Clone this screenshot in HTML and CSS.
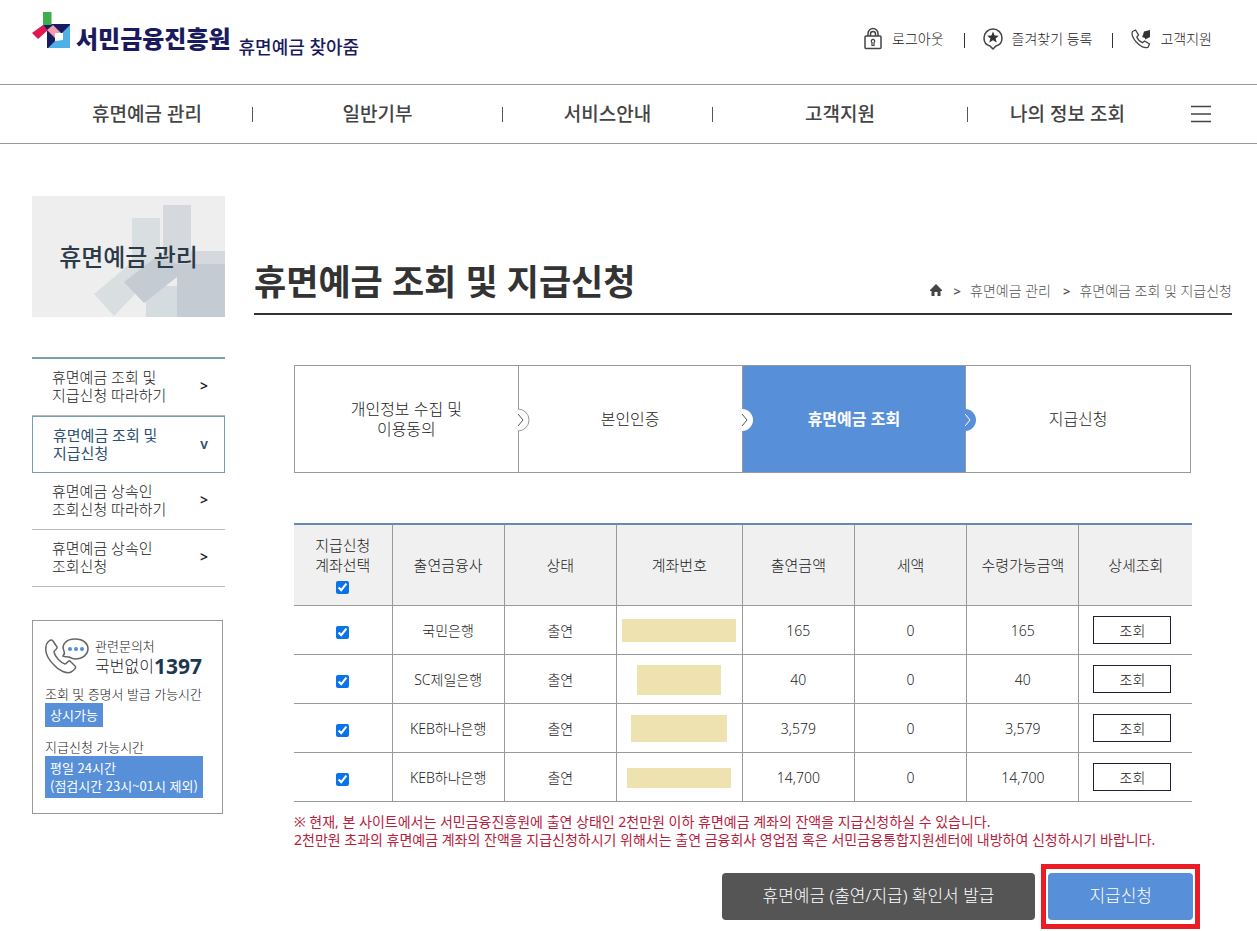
FILE: index.html
```html
<!DOCTYPE html>
<html lang="ko">
<head>
<meta charset="utf-8">
<meta name="viewport" content="width=device-width, initial-scale=1">
<title>휴면예금 조회 및 지급신청 - 휴면예금 찾아줌</title>
<link rel="stylesheet" href="styles.css">
</head>
<body>
<header class="header">
  <a class="logo" href="#">
    <svg class="logo-mark" viewBox="0 0 39 38" width="39" height="38" aria-hidden="true">
      <path fill="#1a1a5e" d="M15 13h23v24H15z"/>
      <path fill="#4db1e5" d="M38 14v23H16l9-9 5-6z"/>
      <path fill="#3bb04a" d="M11 1h8.500v13H11z"/>
      <path fill="#e0184f" d="M0 22 11 14l5 5L6 28z"/>
      <path fill="#1a1a5e" d="M11 14h12l-7 6z"/>
      <path fill="#f19db1" d="m15 19 6-5 8 8-6 5z"/>
      <path fill="#fff" d="M23 22h8v7l-8 1z"/>
    </svg>
    <span class="logo-name">서민금융진흥원</span>
    <span class="logo-service">휴면예금 찾아줌</span>
  </a>
  <ul class="util">
    <li><a href="#">
      <svg viewBox="0 0 20 24" width="20" height="24" fill="none" stroke="#444" stroke-width="1.500" aria-hidden="true"><rect x="2" y="9" width="16" height="12.500" rx="1"/><path d="M5 9V6.500a5 5 0 0 1 10 0V9M7.500 9V7a2.500 2.500 0 0 1 5 0v2"/><path stroke-width="1.200" d="M9 15.500a1.700 1.700 0 1 1 2 0v3H9z"/></svg>
      로그아웃</a></li>
    <li><a href="#">
      <svg viewBox="0 0 20 24" width="20" height="24" fill="none" stroke="#444" stroke-width="1.500" aria-hidden="true"><path d="M10 22 7 19C3 18 1 14.500 1 11a9 9 0 0 1 18 0c0 3.500-2 7-6 8z"/><path fill="#333" stroke="none" d="m10 4.500 1.600 3.900 4.200.3-3.200 2.700 1.100 4.100-3.700-2.200-3.700 2.200 1.100-4.100-3.200-2.700 4.200-.3z"/></svg>
      즐겨찾기 등록</a></li>
    <li><a href="#">
      <svg viewBox="0 0 20 24" width="20" height="24" fill="none" stroke="#444" stroke-width="1.300" aria-hidden="true"><path d="m1.500 4.500 3-1.500 3 5-1.700 2c1 2.500 3.200 4.800 5.700 5.700l2-1.700 5 3-1.500 3.200c-1.500.8-4 .4-6.500-.9C6 16.500 2.800 12.500 1.500 9c-.6-1.800-.6-3.300 0-4.500z"/><path fill="#333" stroke="none" d="M13 4.500 19 3v7l-2 1-3 1.500V11l-3-1 1-2z"/></svg>
      고객지원</a></li>
  </ul>
</header>
<nav class="gnb" aria-label="주 메뉴">
  <ul class="gnb-list">
    <li class="gnb-a"><a href="#">휴면예금 관리</a></li>
    <li class="gnb-b"><a href="#">일반기부</a></li>
    <li class="gnb-c"><a href="#">서비스안내</a></li>
    <li class="gnb-d"><a href="#">고객지원</a></li>
    <li class="gnb-e"><a href="#">나의 정보 조회</a></li>
  </ul>
  <button class="burger" type="button" aria-label="전체 메뉴"><svg viewBox="0 0 20 18" width="20" height="18" aria-hidden="true"><path stroke="#444" stroke-width="1.500" d="M0 1.500h20M0 9h20M0 16.500h20"/></svg></button>
</nav>
<div class="layout">
  <aside class="side">
    <div class="side-title">
      <svg class="side-art" viewBox="0 0 193 121" preserveAspectRatio="none" aria-hidden="true">
        <path fill="#d9dfe1" d="M100 22h28v50l-46 48-20-22 38-32z"/>
        <path fill="#d5d9dd" d="M131 9h28v46h34v14h-62z"/>
        <path fill="#d5dcdf" d="M114 90h31v31h-31z"/>
        <path fill="#c5cbd3" d="m92 86 32-25 22 7h47v53h-48V81l-33 26z"/>
      </svg>
      <h2>휴면예금 관리</h2>
    </div>
    <ul class="lnb">
      <li><a href="#"><span>휴면예금 조회 및<br>지급신청 따라하기</span><b>&gt;</b></a></li>
      <li class="on"><a href="#"><span>휴면예금 조회 및<br>지급신청</span><b>v</b></a></li>
      <li><a href="#"><span>휴면예금 상속인<br>조회신청 따라하기</span><b>&gt;</b></a></li>
      <li><a href="#"><span>휴면예금 상속인<br>조회신청</span><b>&gt;</b></a></li>
    </ul>
    <section class="contact">
      <div class="contact-head">
        <svg viewBox="0 0 44 38" width="44" height="38" fill="none" stroke="#666" stroke-width="1.500" aria-hidden="true"><path d="M3 5C5 3 7 2 8 4l4 6c1 2-3 3-3 5 1 5 7 11 11 12 2 0 3-4 5-3l5 5c2 2-2 5-4 6-4 2-12-1-17-7C3 22 0 15 1 10c0-2 1-4 2-5z"/><path d="M18 19c1-1 2-3 1-5-3-6 2-12 11-12s13 5 13 10-5 10-13 10c-2 0-4-1-6-2-1 0-4 0-6-1z"/><g fill="#4f8ed8" stroke="none"><circle cx="25" cy="12" r="2"/><circle cx="31" cy="12" r="2"/><circle cx="37" cy="12" r="2"/></g></svg>
        <p>관련문의처<span class="tel">국번없이<strong>1397</strong></span></p>
      </div>
      <p class="hours">조회 및 증명서 발급 가능시간<br><span class="tag">상시가능</span></p>
      <p class="hours">지급신청 가능시간<br><span class="tag">평일 24시간<br>(점검시간 23시~01시 제외)</span></p>
    </section>
  </aside>
  <main class="main">
    <div class="page-head">
      <h1>휴면예금 조회 및 지급신청</h1>
      <ol class="crumbs">
        <li><a href="#" aria-label="홈"><svg viewBox="0 0 12 12" width="12" height="12" aria-hidden="true"><path fill="#444" d="M6 0 0 6v1h1.500v5h3V8h3v4h3V7H12V6z"/></svg></a></li>
        <li><a href="#">휴면예금 관리</a></li>
        <li><a href="#">휴면예금 조회 및 지급신청</a></li>
      </ol>
    </div>
    <div class="content">
      <ol class="steps">
        <li>개인정보 수집 및<br>이용동의<svg class="knob" viewBox="0 0 14 24" width="14" height="24" fill="none" aria-hidden="true"><path fill="#fff" d="M0 1h2a11 11 0 0 1 0 22H0z"/><path stroke="#999" d="M2 1a11 11 0 0 1 0 22"/><path stroke="#555" d="m2 6 5 6-5 6"/></svg></li>
        <li>본인인증<svg class="knob" viewBox="0 0 14 24" width="14" height="24" fill="none" aria-hidden="true"><path fill="#fff" d="M0 1h2a11 11 0 0 1 0 22H0z"/><path stroke="#555" d="m2 6 5 6-5 6"/></svg></li>
        <li class="current" aria-current="step">휴면예금 조회<svg class="knob" viewBox="0 0 14 24" width="14" height="24" fill="none" aria-hidden="true"><path fill="#588fd9" d="M0 1h2a11 11 0 0 1 0 22H0z"/><path stroke="#fff" d="m2 6 5 6-5 6"/></svg></li>
        <li>지급신청</li>
      </ol>
      <table class="accounts">
        <colgroup><col class="w-check"><col class="w-std"><col class="w-std"><col class="w-no"><col class="w-std"><col class="w-std"><col class="w-std"><col></colgroup>
        <thead>
          <tr><th scope="col"><label for="all">지급신청<br>계좌선택</label><input id="all" type="checkbox" checked></th><th scope="col">출연금융사</th><th scope="col">상태</th><th scope="col">계좌번호</th><th scope="col">출연금액</th><th scope="col">세액</th><th scope="col">수령가능금액</th><th scope="col">상세조회</th></tr>
        </thead>
        <tbody>
          <tr><td><input type="checkbox" aria-label="국민은행 선택" checked></td><td>국민은행</td><td>출연</td><td><span class="mask mask-a"></span></td><td>165</td><td>0</td><td>165</td><td><button class="view" type="button">조회</button></td></tr>
          <tr><td><input type="checkbox" aria-label="SC제일은행 선택" checked></td><td>SC제일은행</td><td>출연</td><td><span class="mask mask-b"></span></td><td>40</td><td>0</td><td>40</td><td><button class="view" type="button">조회</button></td></tr>
          <tr><td><input type="checkbox" aria-label="KEB하나은행 선택" checked></td><td>KEB하나은행</td><td>출연</td><td><span class="mask mask-c"></span></td><td>3,579</td><td>0</td><td>3,579</td><td><button class="view" type="button">조회</button></td></tr>
          <tr><td><input type="checkbox" aria-label="KEB하나은행 선택" checked></td><td>KEB하나은행</td><td>출연</td><td><span class="mask mask-d"></span></td><td>14,700</td><td>0</td><td>14,700</td><td><button class="view" type="button">조회</button></td></tr>
        </tbody>
      </table>
      <p class="notice">※ 현재, 본 사이트에서는 서민금융진흥원에 출연 상태인 2천만원 이하 휴면예금 계좌의 잔액을 지급신청하실 수 있습니다.<br>2천만원 초과의 휴면예금 계좌의 잔액을 지급신청하시기 위해서는 출연 금융회사 영업점 혹은 서민금융통합지원센터에 내방하여 신청하시기 바랍니다.</p>
    </div>
    <div class="actions">
      <button class="btn btn-dark" type="button">휴면예금 (출연/지급) 확인서 발급</button>
      <div class="highlight"><button class="btn btn-blue" type="button">지급신청</button></div>
    </div>
  </main>
</div>
</body>
</html>
```

FILE: styles.css
```css
* { box-sizing: border-box; }
body, h1, h2, p, ul, ol { margin: 0; padding: 0; }
ul, ol { list-style: none; }
body { background: #fff; color: #222; font: 300 14px/20px "Noto Sans", "Noto Sans CJK KR", sans-serif; }
a { color: inherit; text-decoration: none; }
button { font: inherit; color: inherit; cursor: pointer; }
svg { flex: none; }

.header { display: flex; justify-content: space-between; height: 85px; padding: 11px 45px 0 32px; border-bottom: 1px solid #999; }
.logo { display: flex; align-items: flex-start; color: #1a1a5e; white-space: nowrap; }
.logo-name { margin: 11px 8px 0 5px; font-size: 24px; line-height: 34px; font-weight: 900; }
.logo-service { margin-top: 24px; font-size: 18px; line-height: 24px; font-weight: 500; }
.util { display: flex; align-items: center; height: 56px; }
.util li { display: flex; align-items: center; }
.util li + li::before { content: ""; width: 1px; height: 15px; margin: 2px 18px 0 20px; background: #333; }
.util a { display: flex; align-items: center; gap: 9px; }

.gnb { display: flex; align-items: center; height: 59px; padding: 0 46px 0 42px; border-bottom: 1px solid #999; }
.gnb-list { display: flex; flex: 1; font-size: 19px; font-weight: 500; color: #444; }
.gnb-list li { display: flex; align-items: center; justify-content: center; }
.gnb-list a { flex: 1; text-align: center; white-space: nowrap; }
.gnb-list li:not(:last-child)::after { content: ""; width: 1px; height: 15px; background: #555; }
.gnb-a { flex: 211 0 0; }
.gnb-b { flex: 250 0 0; }
.gnb-c { flex: 210 0 0; }
.gnb-d { flex: 255 0 0; }
.gnb-e { flex: 199 0 0; }
.burger { display: flex; padding: 0 0 0 24px; border: 0; background: none; }

.layout { display: grid; grid-template-columns: 193px 1fr; gap: 29px; padding: 52px 25px 0 32px; }
.side-title { position: relative; display: flex; align-items: center; justify-content: center; height: 121px; background: #eee; }
.side-art { position: absolute; inset: 0; width: 100%; height: 100%; }
.side-title h2 { position: relative; font-size: 24px; line-height: 32px; font-weight: 500; color: #2c3a48; }
.lnb { margin-top: 40px; border-top: 2px solid #7a9fb5; font-size: 15px; line-height: 18px; }
.lnb li { border-bottom: 1px solid #bbb; }
.lnb a { display: flex; align-items: center; justify-content: space-between; height: 56px; padding: 0 17px 2px 20px; }
.lnb b { font-size: 14px; font-weight: 600; }
.lnb .on { border: 1px solid #7a9fb5; color: #2c5070; font-weight: 400; }
.lnb .on a { height: 55px; padding-right: 16px; }
.contact { margin: 33px 2px 0 0; padding: 16px 0 15px 12px; border: 1px solid #999; font-size: 13px; line-height: 18px; white-space: nowrap; }
.contact-head { display: flex; gap: 6px; margin-bottom: 8px; }
.tel { display: flex; align-items: center; font-size: 16px; line-height: 22px; }
.tel strong { font-size: 21px; font-weight: 700; color: #1c3850; }
.hours + .hours { margin-top: 11px; }
.tag { display: inline-block; padding: 3px 5px; background: #588fd9; color: #fff; font-family: "Noto Sans CJK KR", sans-serif; font-weight: 400; }

.page-head { display: flex; align-items: flex-end; justify-content: space-between; height: 119px; border-bottom: 2px solid #333; }
.page-head h1 { padding-bottom: 8px; color: #333; font-size: 35px; line-height: 46px; font-weight: 700; }
.crumbs { display: flex; align-items: center; padding-bottom: 12px; color: #555; }
.crumbs li { display: flex; align-items: center; }
.crumbs li + li::before { content: ">"; margin: 0 9px 0 12px; font-weight: 600; font-size: 13px; }
.content { padding: 50px 40px 0; }
.steps { display: grid; grid-template-columns: repeat(4, 1fr); border: 1px solid #999; font-size: 16px; margin-right: 1px; text-align: center; }
.steps li { position: relative; display: flex; align-items: center; justify-content: center; height: 106px; }
.steps li:not(:last-child) { border-right: 1px solid #999; }
.steps .current { background: #588fd9; color: #fff; font-weight: 700; }
.knob { position: absolute; z-index: 1; right: -12px; top: 42px; }

.accounts { width: 100%; margin-top: 50px; border-collapse: collapse; table-layout: fixed; text-align: center; }
.w-check { width: 98px; }
.w-std { width: 12.5%; }
.w-no { width: 14%; }
.accounts th, .accounts td { padding: 0; border: 1px solid #999; }
.accounts th:first-child, .accounts td:first-child { border-left: 0; }
.accounts th:last-child, .accounts td:last-child { border-right: 0; }
.accounts th { height: 81px; border-top: 2px solid #6688b4; background: #f0f0f0; font-size: 15px; font-weight: 300; }
.accounts td { height: 49px; padding-top: 2px; }
.accounts td:last-child { padding-top: 0; }
.accounts input { display: block; width: 13px; height: 13px; margin: 4px auto 0; accent-color: #0b73ea; }
.accounts th input { margin-top: 6px; }
.accounts label { display: block; }
.mask { display: block; margin: 0 auto; background: #eee3b0; }
.mask-a { width: 114px; height: 23px; }
.mask-b { width: 84px; height: 30px; }
.mask-c { width: 96px; height: 27px; }
.mask-d { width: 104px; height: 20px; }
.view { display: block; width: 78px; height: 28px; margin: 0 14px; padding: 2px 0 0; border: 1px solid #1f1f3a; background: #fff; }
.notice { margin-top: 11px; color: #b8203c; line-height: 18px; font-weight: 400; white-space: nowrap; }
.actions { display: flex; align-items: center; justify-content: flex-end; gap: 6px; margin-top: 15px; padding-right: 32px; }
.btn { height: 47px; padding: 0 41px; border: 0; border-radius: 4px; font-size: 17px; color: #fff; }
.btn-dark { background: #555; }
.btn-blue { display: block; background: #588fd9; }
.highlight { padding: 4px 2px; border: 5px solid #ec1c24; }
```
